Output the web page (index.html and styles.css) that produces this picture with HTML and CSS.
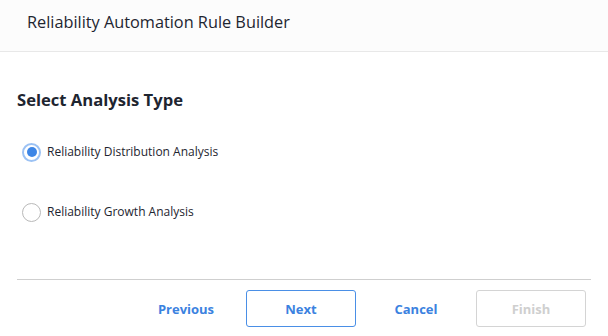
FILE: index.html
```html
<!DOCTYPE html>
<html lang="en">
<head>
<meta charset="utf-8">
<title>Reliability Automation Rule Builder</title>
<link rel="stylesheet" href="styles.css">
</head>
<body>
<div class="dialog">
  <header class="dialog-header">
    <h1 class="dialog-title">Reliability Automation Rule Builder</h1>
  </header>
  <main class="dialog-body">
    <h2 class="section-title">Select Analysis Type</h2>
    <div class="options">
      <label class="option">
        <span class="radio radio-checked"><span class="radio-dot"></span></span>
        <span class="option-label">Reliability Distribution Analysis</span>
      </label>
      <label class="option">
        <span class="radio"></span>
        <span class="option-label">Reliability Growth Analysis</span>
      </label>
    </div>
  </main>
  <footer class="dialog-footer">
    <div class="buttons">
      <button class="btn btn-link">Previous</button>
      <button class="btn btn-outline">Next</button>
      <button class="btn btn-link">Cancel</button>
      <button class="btn btn-disabled" disabled>Finish</button>
    </div>
  </footer>
</div>
</body>
</html>
```

FILE: styles.css
```css
html, body {
  margin: 0;
  padding: 0;
  background: #ffffff;
}

body {
  font-family: "Open Sans", "Noto Sans", sans-serif;
  color: #1f2733;
  width: 608px;
  height: 336px;
  overflow: hidden;
}

.dialog {
  display: flex;
  flex-direction: column;
  height: 336px;
}

.dialog-header {
  box-sizing: border-box;
  height: 52px;
  background: #fcfcfc;
  border-bottom: 1px solid #e8e8e8;
  padding: 10px 0 0 27px;
}

.dialog-title {
  margin: 0;
  font-size: 16.3px;
  font-weight: 400;
  line-height: 24px;
  color: #1e2530;
}

.dialog-body {
  padding: 37px 17px 0 17px;
  flex: 1;
}

.section-title {
  margin: 0;
  font-size: 16.6px;
  font-weight: 700;
  line-height: 22px;
  color: #1e2530;
}

.options {
  display: flex;
  flex-direction: column;
  gap: 40px;
  margin-top: 31px;
  padding-left: 5px;
}

.option {
  display: flex;
  align-items: center;
  gap: 6px;
  height: 20px;
}

.radio {
  width: 19px;
  height: 19px;
  box-sizing: border-box;
  border-radius: 50%;
  border: 1px solid #b9b9b9;
  background: #fff;
  display: flex;
  align-items: center;
  justify-content: center;
}

.radio-checked {
  border: 2px solid #9cc2f4;
}

.radio-dot {
  width: 10px;
  height: 10px;
  border-radius: 50%;
  background: #3d86e6;
}

.option-label {
  font-size: 12px;
  line-height: 16px;
  color: #1e2530;
}

.dialog-footer {
  margin: 0 17px;
  border-top: 1px solid #cfcfcf;
  padding: 10px 5px 9px 0;
}

.buttons {
  display: flex;
  justify-content: flex-end;
  gap: 5px;
}

.btn {
  width: 110px;
  height: 37px;
  box-sizing: border-box;
  border-radius: 3px;
  font-family: inherit;
  font-size: 13px;
  font-weight: 700;
  background: #fff;
  border: 1px solid transparent;
  padding: 0;
  cursor: pointer;
}

.btn-link {
  color: #3b82e0;
}

.btn-outline {
  color: #3b82e0;
  border-color: #4a8fe6;
}

.btn-disabled {
  color: #cfcfcf;
  border-color: #d4d4d4;
  cursor: default;
}
```
